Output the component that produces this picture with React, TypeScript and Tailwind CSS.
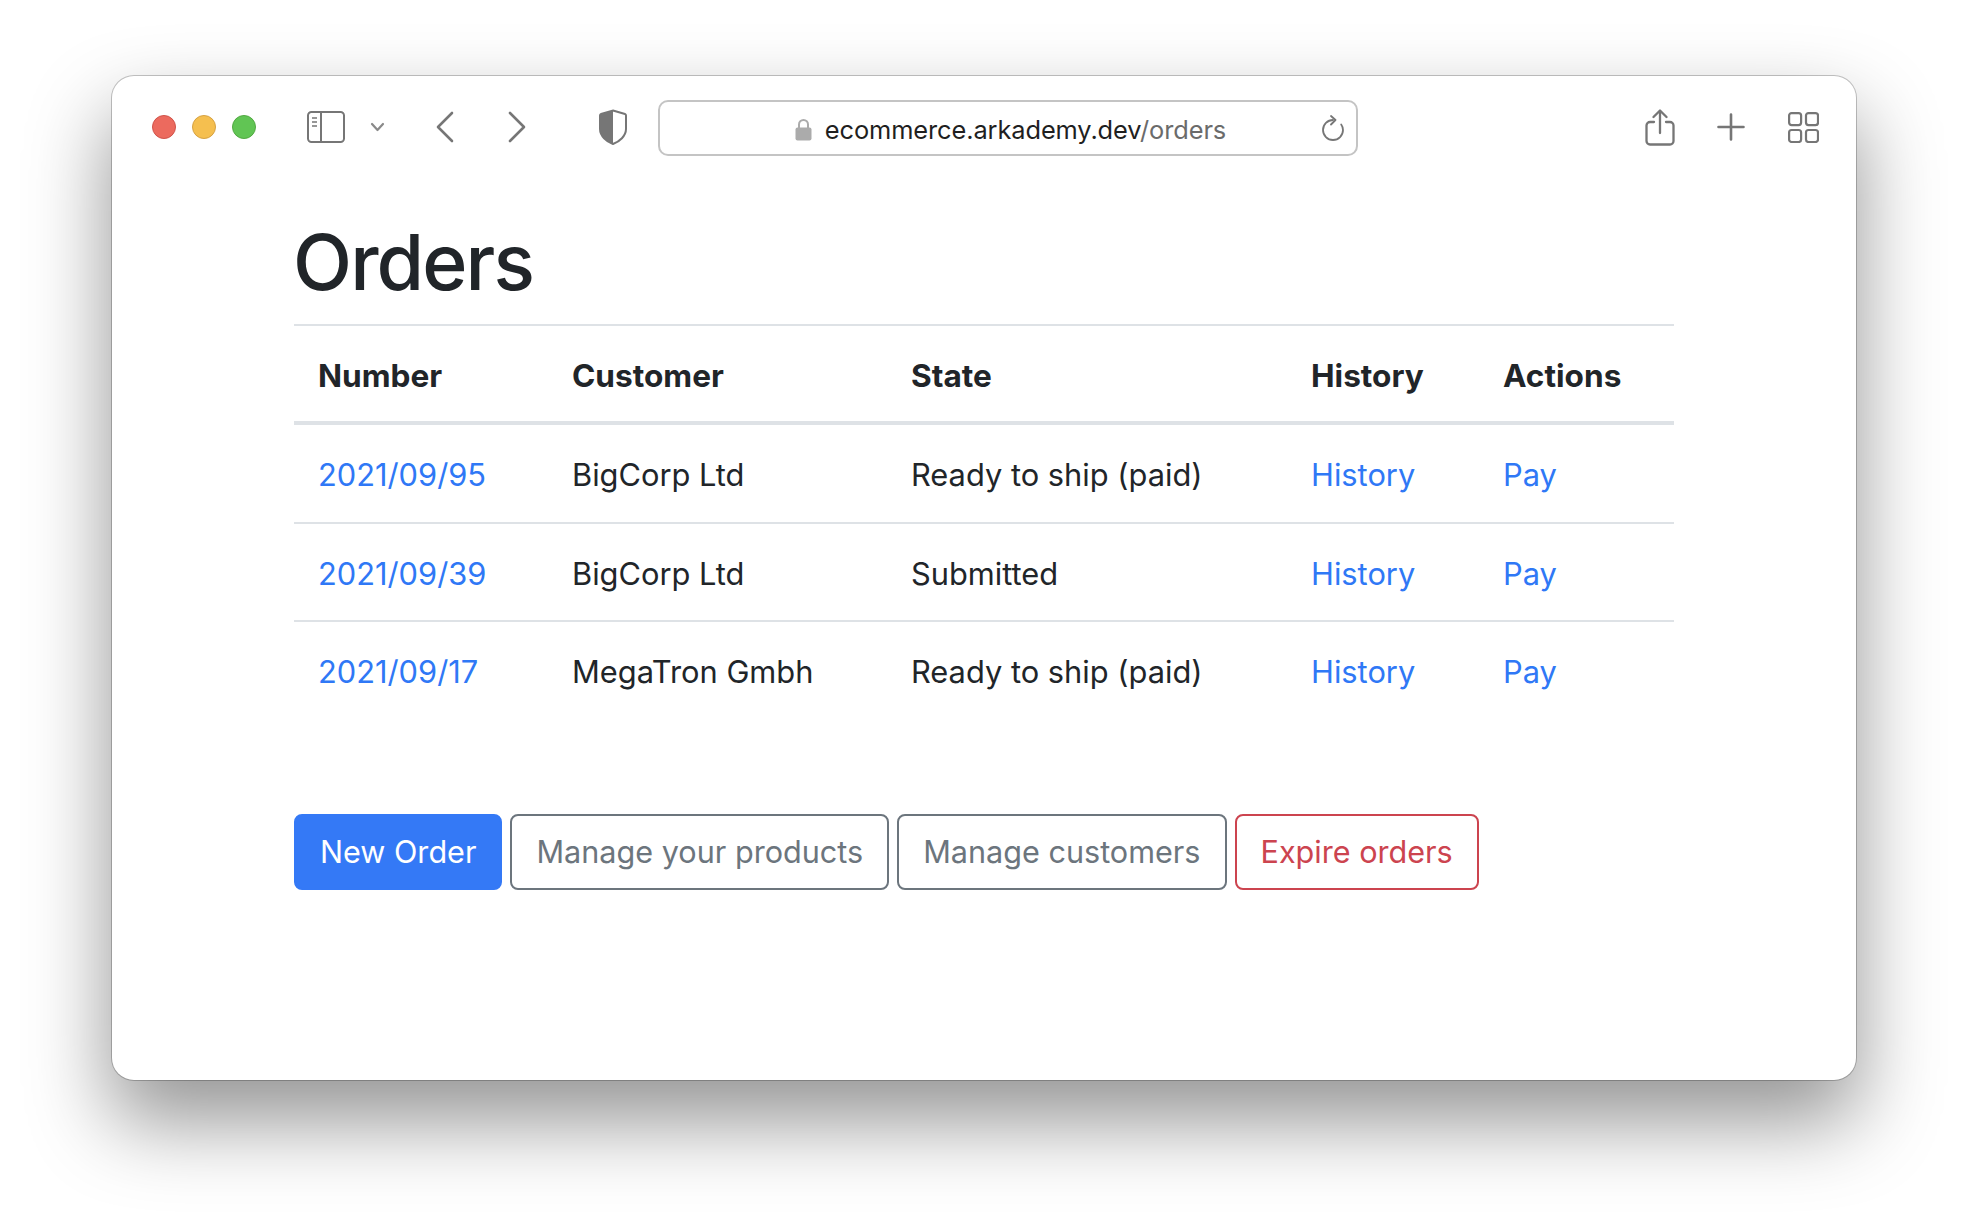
import React from "react";

const rows = [
  { n: "2021/09/95", c: "BigCorp Ltd", s: "Ready to ship (paid)" },
  { n: "2021/09/39", c: "BigCorp Ltd", s: "Submitted" },
  { n: "2021/09/17", c: "MegaTron Gmbh", s: "Ready to ship (paid)" },
];

const Dot = ({ bg, border }: { bg: string; border: string }) => (
  <span className={`block w-6 h-6 rounded-full border ${bg} ${border}`} />
);

export default function App() {
  return (
    <div
      className="w-[1968px] h-[1228px] overflow-hidden bg-white pt-[76px] pl-[112px] text-[#212529]"
      style={{ fontFamily: "Inter, 'Liberation Sans', sans-serif" }}
    >
      <div className="w-[1744px] h-[1004px] bg-white rounded-[22px] shadow-[0_0_0_1px_rgba(0,0,0,0.22),0_40px_82px_2px_rgba(0,0,0,0.42)]">
        {/* toolbar */}
        <div className="h-[102px] flex items-center pl-10 text-[#767676]">
          <div className="flex gap-4">
            <Dot bg="bg-[#ec6a5e]" border="border-[#d0534a]" />
            <Dot bg="bg-[#f5bf4f]" border="border-[#d6a243]" />
            <Dot bg="bg-[#61c554]" border="border-[#52a942]" />
          </div>
          <svg className="ml-[51px]" width="38" height="32" viewBox="0 0 38 32" fill="none" stroke="currentColor">
            <rect x="1" y="1" width="36" height="30" rx="3.5" strokeWidth="2" />
            <path d="M14 1v30" strokeWidth="2" />
            <path d="M5 7h5M5 11h5M5 15h5" strokeWidth="1.6" />
          </svg>
          <svg className="ml-[25px]" width="15" height="10" viewBox="0 0 15 10" fill="none" stroke="#8a8a8a" strokeWidth="2.2" strokeLinecap="round" strokeLinejoin="round">
            <path d="M2 2l5.5 6L13 2" />
          </svg>
          <svg className="ml-[51px]" width="18" height="32" viewBox="0 0 18 32" fill="none" stroke="currentColor" strokeWidth="2.6" strokeLinecap="round" strokeLinejoin="round">
            <path d="M16 2L2 16l14 14" />
          </svg>
          <svg className="ml-[54px]" width="18" height="32" viewBox="0 0 18 32" fill="none" stroke="currentColor" strokeWidth="2.6" strokeLinecap="round" strokeLinejoin="round">
            <path d="M2 2l14 14L2 30" />
          </svg>
          <svg className="ml-[73px]" width="28" height="36" viewBox="0 0 28 36" fill="none">
            <path d="M14 1.5L26 5c1 .3 1 .8 1 1.6V20c0 7-6.5 12.5-13 15C7.500 32.500 1 27 1 20V6.600c0-.8 0-1.300 1-1.600z" stroke="currentColor" strokeWidth="2" />
            <path d="M14 1.500V35C7.500 32.500 1 27 1 20V6.600c0-.8 0-1.300 1-1.600z" fill="currentColor" />
          </svg>
          {/* address bar */}
          <div className="ml-[31px] mt-[2px] w-[700px] h-[56px] rounded-[10px] border-2 border-[#c4c4c4] flex items-center relative">
            <div className="flex-1 flex items-center justify-center gap-[13px] pl-[5px] pt-[3px]">
              <svg width="17" height="23" viewBox="0 0 17 23" fill="none">
                <path d="M4 10V6.500a4.500 4.500 0 0 1 9 0V10" stroke="#ababab" strokeWidth="2" />
                <rect x="0.500" y="9.500" width="16" height="13" rx="2" fill="#ababab" />
              </svg>
              <span className="text-[25.4px] leading-none tracking-[-0.1px] text-[#1f1f1f]">
                ecommerce.arkademy.dev<span className="text-[#6b6b6b]">/orders</span>
              </span>
            </div>
            <svg className="absolute right-[11px] top-[13px]" width="24" height="27" viewBox="0 0 24 27" fill="none" stroke="#767676" strokeWidth="1.800" strokeLinecap="round" strokeLinejoin="round">
              <path d="M12 5a10 10 0 1 0 10 10c0-2.200-.7-4-1.800-5.500" />
              <path d="M10 1l4.500 4L10 9.500" />
            </svg>
          </div>
          <svg className="ml-[287px]" width="30" height="37" viewBox="0 0 30 37" fill="none" stroke="currentColor" strokeWidth="2.300" strokeLinecap="round" strokeLinejoin="round">
            <path d="M9 13H5a3.500 3.500 0 0 0-3.500 3.500V32A3.500 3.500 0 0 0 5 35.500h20a3.500 3.500 0 0 0 3.500-3.500V16.500A3.500 3.500 0 0 0 25 13h-4" />
            <path d="M15 24V2M8.500 8L15 1.500 21.500 8" />
          </svg>
          <svg className="ml-[42px]" width="28" height="28" viewBox="0 0 28 28" fill="none" stroke="currentColor" strokeWidth="2.600" strokeLinecap="round">
            <path d="M14 1.500v25M1.500 14h25" />
          </svg>
          <svg className="ml-[43px]" width="31" height="31" viewBox="0 0 31 31" fill="none" stroke="currentColor" strokeWidth="2.200">
            <rect x="1.100" y="1.100" width="12" height="12" rx="2.500" />
            <rect x="18" y="1.100" width="12" height="12" rx="2.500" />
            <rect x="1.100" y="18" width="12" height="12" rx="2.500" />
            <rect x="18" y="18" width="12" height="12" rx="2.500" />
          </svg>
        </div>

        {/* content */}
        <div className="w-[1380px] ml-[182px]">
          <h1 className="h-[146px] -ml-[1px] text-[77px] leading-[169px] font-[550] tracking-[-1.9px]">Orders</h1>
          <table className="w-full table-fixed border-collapse border-t-2 border-[#dee2e6] text-[30.8px]">
            <colgroup>
              <col className="w-[254px]" />
              <col className="w-[339px]" />
              <col className="w-[400px]" />
              <col className="w-[192px]" />
              <col />
            </colgroup>
            <thead>
              <tr className="h-[98px] border-b-4 border-[#dee2e6] text-left text-[31.6px]">
                {["Number", "Customer", "State", "History", "Actions"].map((h) => (
                  <th key={h} className="px-6 pt-1 font-bold">{h}</th>
                ))}
              </tr>
            </thead>
            <tbody>
              {rows.map((r, i) => (
                <tr key={r.n} className={i === 0 ? "h-[100px] border-b-2 border-[#dee2e6]" : i === 1 ? "h-[98px] border-b-2 border-[#dee2e6]" : "h-[98px]"}>
                  <td className="px-6 pt-1 text-[#2f78f6]">{r.n}</td>
                  <td className="px-6 pt-1">{r.c}</td>
                  <td className="px-6 pt-1">{r.s}</td>
                  <td className="px-6 pt-1 text-[#2f78f6]">History</td>
                  <td className="px-6 pt-1 text-[#2f78f6]">Pay</td>
                </tr>
              ))}
            </tbody>
          </table>
          <div className="mt-[95px] flex gap-2 text-[30.6px]">
            <button className="h-[76px] px-6 rounded-lg border-2 border-[#3479f6] bg-[#3479f6] text-white">New Order</button>
            <button className="h-[76px] px-6 rounded-lg border-2 border-[#6c757d] text-[#6c757d]">Manage your products</button>
            <button className="h-[76px] px-6 rounded-lg border-2 border-[#6c757d] text-[#6c757d]">Manage customers</button>
            <button className="h-[76px] px-6 rounded-lg border-2 border-[#cc444f] text-[#cc444f]">Expire orders</button>
          </div>
        </div>
      </div>
    </div>
  );
}
